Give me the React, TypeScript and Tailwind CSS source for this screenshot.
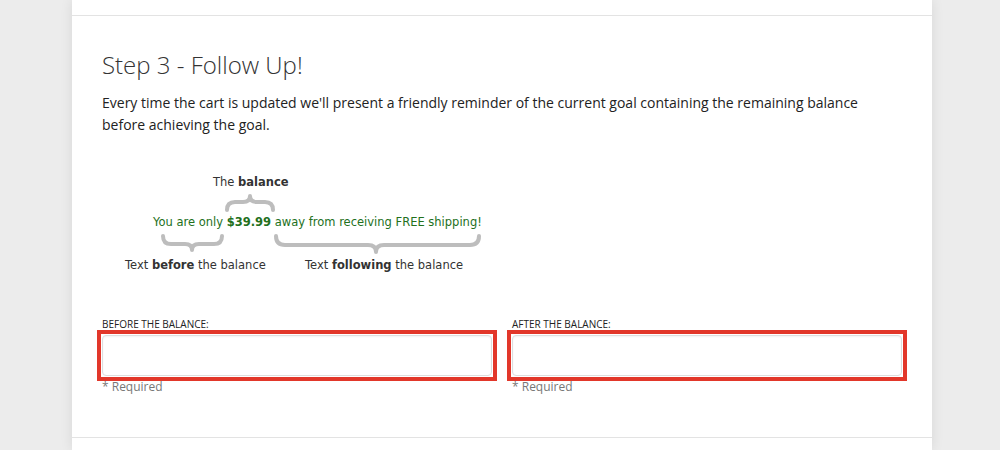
import React from "react";

const sans = { fontFamily: '"Open Sans", "Noto Sans", sans-serif' };

function Braces() {
  return (
    <svg className="absolute left-0 top-0" width="400" height="100" fill="none" stroke="#bdbdbd" strokeWidth="4" strokeLinecap="round" strokeLinejoin="round">
      <path d="M125,40 Q125,32 133,32 L141,32 Q148,32 148,26 Q148,32 155,32 L163,32 Q171,32 171,40" />
      <path d="M61,66 Q61,74 69,74 L83,74 Q90,74 90,80 Q90,74 97,74 L112,74 Q120,74 120,66" />
      <path d="M174,66 Q174,75 183,75 L266,75 Q274,75 274,82 Q274,75 282,75 L368,75 Q377,75 377,66" />
    </svg>
  );
}

function Diagram() {
  return (
    <div className="relative h-[148px] text-[11.5px] leading-[14px] text-[#333]" style={{ fontFamily: '"DejaVu Sans", Verdana, sans-serif' }}>
      <Braces />
      <div className="absolute left-[111px] top-[5px]">
        The <b>balance</b>
      </div>
      <div className="absolute left-[51px] top-[45px] text-[#23701c] whitespace-nowrap">
        You are only <b>$39.99</b> away from receiving FREE shipping!
      </div>
      <div className="absolute left-[23px] top-[88px] whitespace-nowrap">
        Text <b>before</b> the balance
      </div>
      <div className="absolute left-[203px] top-[88px] whitespace-nowrap">
        Text <b>following</b> the balance
      </div>
    </div>
  );
}

function Field({ label }: { label: string }) {
  return (
    <div className="flex flex-col">
      <label className="text-[10px] leading-[12px] uppercase text-[#222]">{label}</label>
      <div className="-mx-[5px] border-4 border-[#e2372a] p-px">
        <input
          type="text"
          className="block h-[41px] w-full rounded-[4px] border border-[#dedede] bg-white shadow-[inset_0_1px_2px_rgba(0,0,0,0.05)] outline-none"
        />
      </div>
      <span className="mt-[-2px] text-[12px] leading-[16px] text-[#777]">* Required</span>
    </div>
  );
}

export default function App() {
  return (
    <div className="min-h-[450px] bg-[#ececec]" style={sans}>
      <div className="ml-[72px] w-[860px] min-h-[450px] bg-white shadow-[0_0_12px_rgba(0,0,0,0.09)]">
        <div className="h-[16px] border-b border-[#e3e3e3]" />
        <section className="px-[30px] pt-[33px] pb-[42px]">
          <h2 className="text-[24px] leading-[32px] font-light text-[#333]">Step 3 - Follow Up!</h2>
          <p className="mt-[11px] text-[14px] leading-[22px] text-[#222]">
            Every time the cart is updated we'll present a friendly reminder of the current goal containing the remaining balance before achieving the goal.
          </p>
          <div className="mt-[34px]">
            <Diagram />
          </div>
          <div className="grid grid-cols-2 gap-[20px]">
            <Field label="Before the balance:" />
            <Field label="After the balance:" />
          </div>
        </section>
        <div className="border-t border-[#e3e3e3]" />
      </div>
    </div>
  );
}
